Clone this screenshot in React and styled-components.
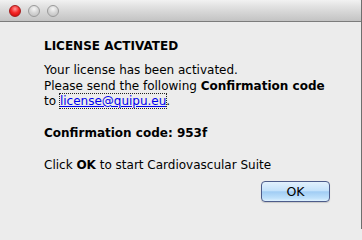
import React from "react";
import styled, { createGlobalStyle } from "styled-components";

const GlobalStyle = createGlobalStyle`
  html, body {
    margin: 0;
    padding: 0;
    background: #ececec;
  }
`;

const Window = styled.div`
  display: flex;
  flex-direction: column;
  box-sizing: border-box;
  width: 362px;
  height: 229px;
  background: #ececec;
  border-right: 1px solid #6e6e6e;
  font-family: "DejaVu Sans", Verdana, sans-serif;
  color: #000;
`;

const TitleBar = styled.div`
  display: flex;
  align-items: center;
  gap: 7px;
  height: 21px;
  padding-left: 9px;
  background: linear-gradient(#f2f2f2, #e2e2e2 30%, #c3c3c3);
  border-bottom: 1px solid #7c7c7c;
  border-top-right-radius: 3px;
  flex-shrink: 0;
`;

const Light = styled.span`
  width: 12px;
  height: 12px;
  border-radius: 50%;
  box-sizing: border-box;
  border: 1px solid ${(p) => (p.red ? "#a51d1d" : "#9a9a9a")};
  background: ${(p) =>
    p.red
      ? "radial-gradient(circle at 50% 30%, #ff9a9a 0, #f52a2a 45%, #c80000 100%)"
      : "radial-gradient(circle at 50% 30%, #f6f6f6 0, #d4d4d4 50%, #bdbdbd 100%)"};
`;

const Body = styled.div`
  display: flex;
  flex-direction: column;
  padding: 17px 31px 0 44px;
  font-size: 12px;
  line-height: 15.5px;
`;

const Heading = styled.div`
  font-weight: bold;
  margin-bottom: 8.5px;
`;

const Para = styled.div`
  margin-bottom: ${(p) => p.gap || 0}px;
`;

const Link = styled.a`
  color: #0000ee;
  text-decoration: underline;
  outline: 1px dotted #222;
  outline-offset: 0;
`;

const Footer = styled.div`
  display: flex;
  justify-content: flex-end;
  margin-top: 7.5px;
`;

const Button = styled.button`
  width: 69px;
  height: 21px;
  border: 1px solid #4d5c8a;
  border-radius: 4px;
  background: linear-gradient(
    #e2f1fd 0%,
    #c4e2fb 45%,
    #a1cdf4 52%,
    #bfe1fb 85%,
    #dff1fe 100%
  );
  font-family: "DejaVu Sans", Verdana, sans-serif;
  font-size: 12.5px;
  color: #000;
  padding: 0;
  box-shadow: 0 1px 1px rgba(0, 0, 0, 0.15);
`;

export default function App() {
  return (
    <>
      <GlobalStyle />
      <Window>
        <TitleBar>
          <Light red />
          <Light />
          <Light />
        </TitleBar>
        <Body>
          <Heading>LICENSE ACTIVATED</Heading>
          <Para gap={16.5}>
            Your license has been activated.
            <br />
            Please send the following <b>Confirmation code</b>
            <br />
            to <Link href="#">license@quipu.eu</Link>.
          </Para>
          <Para gap={16.5}>
            <b>Confirmation code: 953f</b>
          </Para>
          <Para>
            Click <b>OK</b> to start Cardiovascular Suite
          </Para>
          <Footer>
            <Button>OK</Button>
          </Footer>
        </Body>
      </Window>
    </>
  );
}
